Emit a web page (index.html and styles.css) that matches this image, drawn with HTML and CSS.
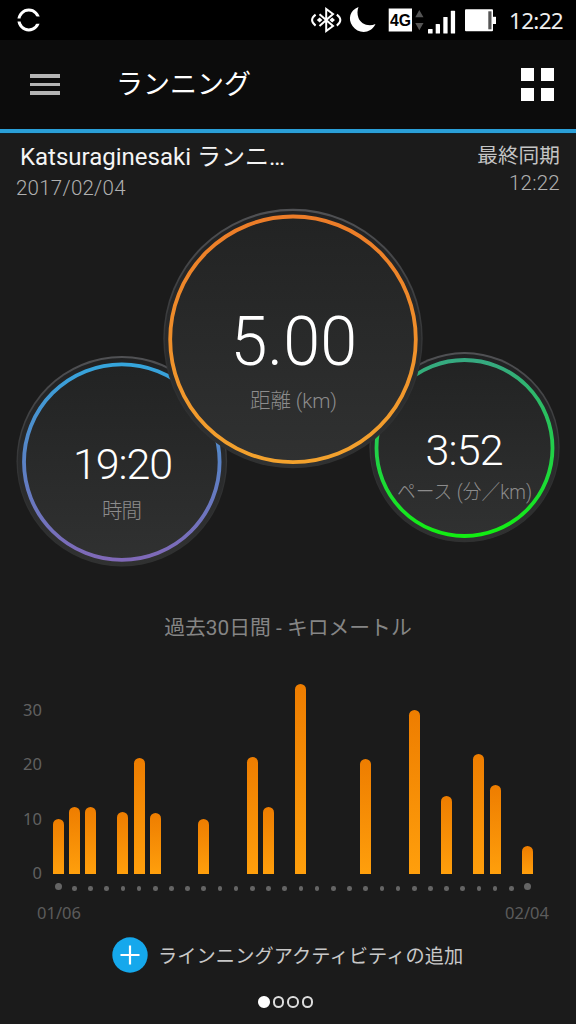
FILE: index.html
```html
<!DOCTYPE html>
<html lang="ja">
<head>
<meta charset="utf-8">
<title>ランニング</title>
<link rel="stylesheet" href="styles.css">
</head>
<body>
<div class="screen">
  <div class="status">
    <svg class="status-icons" width="500" height="40" viewBox="0 0 500 40">
      <circle cx="28.800" cy="20" r="9.900" fill="none" stroke="#fff" stroke-width="3"/>
      <path d="M15 18.600H24V21.400H15ZM32 16.500H42V23.800H32Z" fill="#000"/>
      <g fill="none" stroke="#fff" stroke-width="2">
        <path d="M319.500 14.200L333 26L326.200 31V9L333 14L319.500 26"/>
        <path d="M315.600 14.600Q308.500 20 315.600 25.600M336.800 14.600Q343.900 20 336.800 25.600"/>
      </g>
      <path d="M316.800 20l2.800-2.600 2.800 2.600-2.800 2.600zM329.400 20l2.800-2.600 2.800 2.600-2.800 2.600z" fill="#fff"/>
      <path d="M358.500 7C350 10 347.500 19 352.500 26C358 34 370.500 34.500 375.500 24C368 27.200 360.500 23.500 358.500 18C357 14 357.300 10 358.500 7Z" fill="#fff"/>
      <rect x="388.700" y="8.500" width="23.300" height="23" fill="#fff"/>
      <text class="net" x="390" y="26.300" textLength="21" lengthAdjust="spacingAndGlyphs">4G</text>
      <path d="M415.300 17.300L419.300 10L423.500 17.300ZM415.300 23L419.300 30.300L423.500 23Z" fill="#555"/>
      <g fill="#fff">
        <rect x="428" y="29" width="4.600" height="4.600" rx=".6"/>
        <rect x="435.700" y="24" width="4.300" height="9.600" rx=".6"/>
        <rect x="443.300" y="17" width="4.300" height="16.600" rx=".6"/>
        <rect x="450.800" y="10.800" width="4.300" height="22.800" rx=".6"/>
        <rect x="465" y="9.300" width="28" height="22" rx="1"/>
        <rect x="493" y="16.800" width="3" height="7.200"/>
      </g>
      <rect x="488.300" y="11.300" width="3.200" height="18" fill="#555"/>
    </svg>
    <span class="clock">12:22</span>
  </div>
  <div class="appbar">
    <div class="menu"><i></i><i></i><i></i></div>
    <h1 class="title">ランニング</h1>
    <div class="tiles"><i></i><i></i><i></i><i></i></div>
  </div>
  <div class="info">
    <div class="activity">
      <div class="name"><span>Katsuraginesaki</span><span class="name-jp">ランニ</span><span>…</span></div>
      <div class="date">2017/02/04</div>
    </div>
    <div class="sync">
      <div class="sync-label">最終同期</div>
      <div class="sync-time">12:22</div>
    </div>
  </div>
  <svg class="gauges" width="576" height="375" viewBox="0 200 576 375">
    <defs>
      <linearGradient id="face" x2="0" y2="1"><stop stop-color="#222323"/><stop offset="1" stop-color="#303131"/></linearGradient>
      <linearGradient id="rim" x2="0" y2="1"><stop stop-color="#505154"/><stop offset=".6" stop-color="#303132"/><stop offset="1" stop-color="#303131"/></linearGradient>
      <linearGradient id="gap" x2="0" y2="1"><stop stop-color="#212223"/><stop offset=".5" stop-color="#292a2b"/><stop offset="1" stop-color="#303131"/></linearGradient>
      <linearGradient id="orange" x2="0" y2="1"><stop stop-color="#ec7c28"/><stop offset="1" stop-color="#f3a22d"/></linearGradient>
      <linearGradient id="blue" x2="0" y2="1"><stop stop-color="#35a5dc"/><stop offset=".5" stop-color="#5a82c5"/><stop offset="1" stop-color="#8069b8"/></linearGradient>
      <linearGradient id="green" x2="0" y2="1"><stop stop-color="#36a981"/><stop offset=".6" stop-color="#1ed63f"/><stop offset="1" stop-color="#12ee12"/></linearGradient>
    </defs>
    <g>
      <circle cx="121.800" cy="461.200" r="105.300" fill="url(#rim)"/>
      <circle cx="121.800" cy="462" r="104" fill="url(#gap)"/>
      <circle cx="121.800" cy="462.100" r="97.800" fill="url(#face)" stroke="url(#blue)" stroke-width="3.800"/>
    </g>
    <g>
      <circle cx="464.500" cy="447.200" r="95.100" fill="url(#rim)"/>
      <circle cx="464.500" cy="448" r="93.900" fill="url(#gap)"/>
      <circle cx="464.500" cy="448" r="88" fill="url(#face)" stroke="url(#green)" stroke-width="3.800"/>
    </g>
    <g>
      <circle cx="293" cy="338.500" r="129.700" fill="url(#rim)"/>
      <circle cx="293" cy="339.300" r="128.300" fill="url(#gap)"/>
      <circle cx="293" cy="339.300" r="122.800" fill="url(#face)" stroke="url(#orange)" stroke-width="3.800"/>
    </g>
    <g class="values">
      <text class="big" x="230.500" y="365" textLength="126.500" lengthAdjust="spacingAndGlyphs">5.00</text>
      <text class="mid" x="73" y="478.500" textLength="100">19:20</text>
      <text class="mid" x="425.500" y="464.500" textLength="78">3:52</text>
    </g>
    <g class="units">
      <text x="250" y="407.500" textLength="87">距離 (km)</text>
      <text x="102" y="518" textLength="40">時間</text>
      <text x="397" y="499" textLength="135" lengthAdjust="spacingAndGlyphs">ペース (分／km)</text>
    </g>
  </svg>
  <h2 class="chart-title">過去30日間 - キロメートル</h2>
  <div class="chart">
    <div class="scale"><span>30</span><span>20</span><span>10</span><span>0</span></div>
    <div class="plot">
      <div class="bars">
        <b style="height:55px"></b><b style="height:67px"></b><b style="height:67px"></b><b></b><b style="height:62px"></b><b style="height:116px"></b><b style="height:61px"></b><b></b><b></b><b style="height:55px"></b>
        <b></b><b></b><b style="height:117px"></b><b style="height:67px"></b><b></b><b style="height:190px"></b><b></b><b></b><b></b><b style="height:115px"></b>
        <b></b><b></b><b style="height:164px"></b><b></b><b style="height:78px"></b><b></b><b style="height:120px"></b><b style="height:89px"></b><b></b><b style="height:28px"></b>
      </div>
      <div class="dots">
        <i class="end"></i><i></i><i></i><i></i><i></i><i></i><i></i><i></i><i></i><i></i><i></i><i></i><i></i><i></i><i></i><i></i><i></i><i></i><i></i><i></i><i></i><i></i><i></i><i></i><i></i><i></i><i></i><i></i><i></i><i class="end"></i>
      </div>
    </div>
  </div>
  <div class="range"><span>01/06</span><span>02/04</span></div>
  <div class="add">
    <svg width="36" height="36" viewBox="0 0 36 36"><circle cx="18" cy="18" r="17.700" fill="#15a8ec"/><path d="M8.500 18H27.500M18 8.500V27.500" stroke="#fff" stroke-width="2.200"/></svg>
    <span class="add-label">ラインニングアクティビティの追加</span>
  </div>
  <div class="pager"><i class="on"></i><i></i><i></i><i></i></div>
</div>
</body>
</html>
```

FILE: styles.css
```css
* { box-sizing: border-box; }
body { margin: 0; background: #1b1b1b; }
.screen {
  width: 576px; height: 1024px; overflow: hidden;
  display: flex; flex-direction: column;
  background: #1b1b1b; color: #fff;
  font-family: Roboto, "Noto Sans CJK JP", sans-serif;
  white-space: nowrap;
}
.status { height: 40px; flex: none; display: flex; background: #000; }
.status-icons { flex: none; }
.net { font: bold 17px "Liberation Sans", sans-serif; fill: #000; }
.clock { margin-left: 9px; font: 22.500px/41px "Noto Sans", sans-serif; letter-spacing: -.7px; color: #eee; }
.appbar {
  height: 94px; flex: none; display: flex; align-items: flex-start;
  padding: 0 22px 0 30px; background: #0c0c0c;
  border-bottom: 1px solid #10212b;
  box-shadow: inset 0 -4px #2a9fd8;
}
.menu { display: grid; gap: 5px; margin-top: 34px; width: 30px; }
.menu i { height: 3.600px; background: #b5b5b5; }
.title { margin: 0 auto 0 56px; font-size: 27px; line-height: 91px; font-weight: 400; }
.tiles { display: grid; grid-template-columns: 13px 13px; gap: 7px; margin-top: 28px; }
.tiles i { height: 13px; background: #fff; }
.info { height: 66px; flex: none; display: flex; justify-content: space-between; padding: 0 16px; }
.name { display: flex; margin: 8px 0 0 4px; font-size: 24px; line-height: 30px; color: #f4f4f4; }
.name-jp { margin-left: 6px; }
.date { margin-top: 4px; font-size: 20.500px; line-height: 24px; font-weight: 300; color: #b0b0b0; letter-spacing: .25px; }
.sync { text-align: right; }
.sync-label { margin-top: 7px; font-size: 20.700px; line-height: 30px; color: #c4c4c4; }
.sync-time { font-size: 20.500px; line-height: 24px; font-weight: 300; color: #b0b0b0; letter-spacing: .25px; }
.gauges { flex: none; display: block; }
.values { fill: #fff; font-weight: 300; }
.big { font-size: 68px; }
.mid { font-size: 43px; }
.units { fill: #8c8c8c; font-size: 20.500px; font-weight: 300; }
.chart-title { margin: 38px 0 0; text-align: center; font-size: 20.800px; line-height: 30px; font-weight: 400; color: #858585; }
.chart { height: 248px; flex: none; padding: 0 40px 0 0; display: flex; align-items: flex-end; }
.scale { width: 50px; height: 208px; padding-right: 8px; display: flex; flex-direction: column; text-align: right; font: 16.500px/54.400px "Noto Sans", sans-serif; color: #616161; }
.plot { width: 486px; }
.bars { height: 192px; display: grid; grid-template-columns: repeat(30, 16.200px); justify-items: center; align-items: end; }
.bars b { width: 11px; border-radius: 5.500px 5.500px 0 0; background: linear-gradient(#ee7d00, #ff9f0c); }
.dots { height: 17px; display: grid; grid-template-columns: repeat(30, 16.200px); justify-items: center; padding-top: 12px; }
.dots i { width: 4.600px; height: 4.600px; border-radius: 50%; background: #656565; }
.dots .end { width: 7px; height: 7px; margin-top: -3px; }
.range { display: flex; justify-content: space-between; padding: 10px 27px 0 37px; font: 16.500px/24px "Noto Sans", sans-serif; color: #5c5c5c; }
.add { display: flex; align-items: center; margin: 12px 0 0 112px; height: 36px; }
.add-label { margin-left: 10px; font-size: 19.200px; letter-spacing: .1px; color: #c8c8c8; }
.pager { display: flex; gap: 3px; margin: 23px 0 0 258px; }
.pager i { width: 11.500px; height: 11.500px; border: 2px solid #ddd; border-radius: 50%; }
.pager .on { background: #fff; border-color: #fff; }
```
